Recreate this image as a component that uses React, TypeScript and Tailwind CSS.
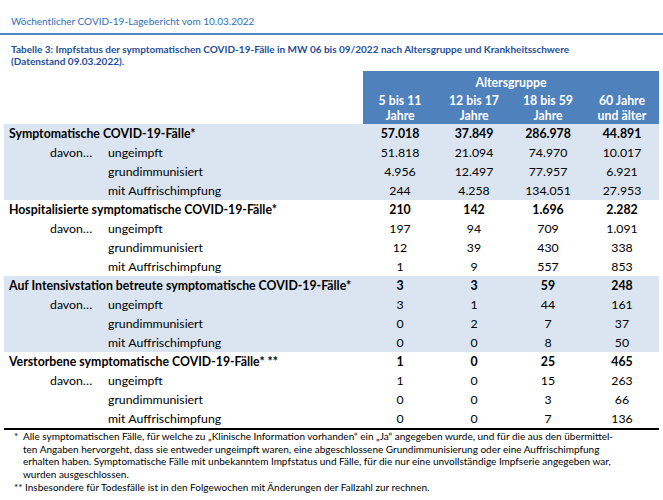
import React from 'react';

type Group = {
  title: string;
  total: string[];
  rows: [string, string, string, string, string][];
  shaded: boolean;
};

const groups: Group[] = [
  {
    title: 'Symptomatische COVID-19-Fälle*',
    total: ['57.018', '37.849', '286.978', '44.891'],
    rows: [
      ['ungeimpft', '51.818', '21.094', '74.970', '10.017'],
      ['grundimmunisiert', '4.956', '12.497', '77.957', '6.921'],
      ['mit Auffrischimpfung', '244', '4.258', '134.051', '27.953'],
    ],
    shaded: true,
  },
  {
    title: 'Hospitalisierte symptomatische COVID-19-Fälle*',
    total: ['210', '142', '1.696', '2.282'],
    rows: [
      ['ungeimpft', '197', '94', '709', '1.091'],
      ['grundimmunisiert', '12', '39', '430', '338'],
      ['mit Auffrischimpfung', '1', '9', '557', '853'],
    ],
    shaded: false,
  },
  {
    title: 'Auf Intensivstation betreute symptomatische COVID-19-Fälle*',
    total: ['3', '3', '59', '248'],
    rows: [
      ['ungeimpft', '3', '1', '44', '161'],
      ['grundimmunisiert', '0', '2', '7', '37'],
      ['mit Auffrischimpfung', '0', '0', '8', '50'],
    ],
    shaded: true,
  },
  {
    title: 'Verstorbene symptomatische COVID-19-Fälle* **',
    total: ['1', '0', '25', '465'],
    rows: [
      ['ungeimpft', '1', '0', '15', '263'],
      ['grundimmunisiert', '0', '0', '3', '66'],
      ['mit Auffrischimpfung', '0', '0', '7', '136'],
    ],
    shaded: false,
  },
];

const ageCols = [
  ['5 bis 11', 'Jahre'],
  ['12 bis 17', 'Jahre'],
  ['18 bis 59', 'Jahre'],
  ['60 Jahre', 'und älter'],
];

function Row({ label, davon, sub, values, bold }: { label?: string; davon?: boolean; sub?: string; values: string[]; bold?: boolean }) {
  return (
    <div className={`grid grid-cols-[359px_repeat(4,74px)] h-[19px] items-center leading-[19px] ${bold ? 'font-bold' : ''}`}>
      <div className="flex pl-[5px] whitespace-nowrap">
        {label ? (
          <span>{label}</span>
        ) : (
          <>
            <span className="w-[58px] pl-[41px] box-content">{davon ? 'davon…' : ''}</span>
            <span>{sub}</span>
          </>
        )}
      </div>
      {values.map((v, i) => (
        <div key={i} className="text-center">{v}</div>
      ))}
    </div>
  );
}

export default function App() {
  return (
    <div className="w-[663px] h-[500px] bg-white overflow-hidden font-['Lato','Liberation_Sans',sans-serif] text-black">
      {/* Kopfzeile */}
      <div className="pt-[14px] pl-[11px] text-[10px] leading-[14px] text-[#2f6fb7]">
        Wöchentlicher COVID-19-Lagebericht vom 10.03.2022
      </div>
      <div className="mt-[5px] h-[2px] bg-[#4f86c6]" />

      {/* Tabellentitel */}
      <div className="mt-[8px] pl-[11px] text-[10px] leading-[12px] font-bold text-[#1f4e99]">
        <div>Tabelle 3: Impfstatus der symptomatischen COVID-19-Fälle in MW 06 bis 09/2022 nach Altersgruppe und Krankheitsschwere</div>
        <div>(Datenstand 09.03.2022).</div>
      </div>

      {/* Tabelle */}
      <div className="mt-[4px] ml-[4px] w-[655px] text-[12.3px]">
        <div className="grid grid-cols-[359px_296px]">
          <div />
          <div className="bg-[#4f81bd] text-white font-bold text-center">
            <div className="h-[22px] pt-[4px] leading-[16px]">Altersgruppe</div>
            <div className="grid grid-cols-4 h-[31px] leading-[15px]">
              {ageCols.map(([a, b]) => (
                <div key={a}>
                  <div>{a}</div>
                  <div>{b}</div>
                </div>
              ))}
            </div>
          </div>
        </div>

        {groups.map((g) => (
          <div key={g.title} className={g.shaded ? 'bg-[#dbe5f1]' : ''}>
            <Row label={g.title} values={g.total} bold />
            {g.rows.map((r, i) => (
              <Row key={r[0]} davon={i === 0} sub={r[0]} values={r.slice(1)} />
            ))}
          </div>
        ))}

        <div className="h-[2px] bg-black" />
      </div>

      {/* Fußnoten */}
      <div className="pl-[14px] pr-[20px] text-[10px] leading-[12.7px] text-black">
        <div className="flex">
          <span className="w-[9px] shrink-0">*</span>
          <span>
            Alle symptomatischen Fälle, für welche zu „Klinische Information vorhanden“ ein „Ja“ angegeben wurde, und für die aus den übermittel-<br />
            ten Angaben hervorgeht, dass sie entweder ungeimpft waren, eine abgeschlossene Grundimmunisierung oder eine Auffrischimpfung<br />
            erhalten haben. Symptomatische Fälle mit unbekanntem Impfstatus und Fälle, für die nur eine unvollständige Impfserie angegeben war,<br />
            wurden ausgeschlossen.
          </span>
        </div>
        <div className="whitespace-nowrap">** Insbesondere für Todesfälle ist in den Folgewochen mit Änderungen der Fallzahl zur rechnen.</div>
      </div>
    </div>
  );
}
